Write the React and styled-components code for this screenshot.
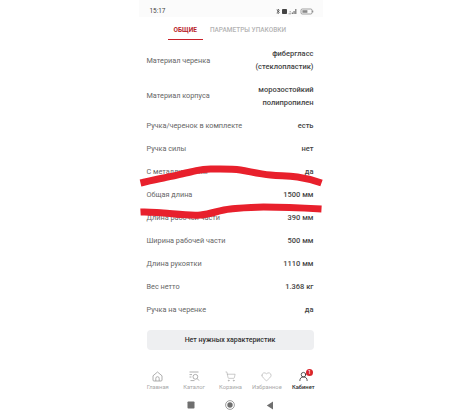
import React from 'react';
import styled, { createGlobalStyle } from 'styled-components';
import { ShoppingCart, Heart, UserRound } from 'lucide-react';

const specs = [
    { name: 'Материал черенка', value: ['фибергласс', '(стеклопластик)'], tall: true },
    { name: 'Материал корпуса', value: ['морозостойкий', 'полипропилен'], tall: true },
    { name: 'Ручка/черенок в комплекте', value: ['есть'] },
    { name: 'Ручка силы', value: ['нет'] },
    { name: 'С металлическим', value: ['да'] },
    { name: 'Общая длина', value: ['1500 мм'] },
    { name: 'Длина рабочей части', value: ['390 мм'] },
    { name: 'Ширина рабочей части', value: ['500 мм'] },
    { name: 'Длина рукоятки', value: ['1110 мм'] },
    { name: 'Вес нетто', value: ['1.368 кг'] },
    { name: 'Ручка на черенке', value: ['да'] },
];

const HomeIcon = function HomeIcon() {
    return (
        <svg width="11" height="11" viewBox="0 0 11 11" fill="none" stroke="currentColor" strokeWidth="0.8">
            <path d="M1 4.8 5.5 1 10 4.8V9a1 1 0 0 1-1 1H2a1 1 0 0 1-1-1z" />
            <path d="M3.8 10V7.4a1.7 1.7 0 0 1 3.4 0V10" />
        </svg>
    );
};

const CatalogIcon = function CatalogIcon() {
    return (
        <svg width="11" height="11" viewBox="0 0 11 11" fill="none" stroke="currentColor" strokeWidth="0.8">
            <path d="M0.5 1h9M0.5 3.6H3M0.5 6H2.4M1.5 9.6h4" />
            <circle cx="6.4" cy="5.8" r="2.4" />
            <path d="M8.2 7.6 10 9.6" />
        </svg>
    );
};

const tabsNav = [
    { label: 'Главная', icon: <HomeIcon /> },
    { label: 'Каталог', icon: <CatalogIcon /> },
    { label: 'Корзина', icon: <ShoppingCart size={11} strokeWidth={1.1} /> },
    { label: 'Избранное', icon: <Heart size={11} strokeWidth={1.1} /> },
    { label: 'Кабинет', icon: <UserRound size={11} strokeWidth={1.6} />, active: true, badge: 1 },
];

const App = function App() {
    return (
        <Screen>
            <GlobalStyle />
            <StatusBar>
                <span>15:17</span>
                <svg width="38" height="7" viewBox="0 0 38 7">
                    <path d="M0.6 1.8 3.4 4.4 2 5.8V1l1.4 1.4L0.6 5" fill="none" stroke="#333" strokeWidth="0.6" />
                    <rect x="6" y="1" width="5" height="5" rx="0.8" fill="#444" />
                    <path d="M12.5 5.8H15M13.5 3.8H15" stroke="#777" strokeWidth="0.7" />
                    <path d="M15.8 6V4.5h.9V6zM17.6 6V3h.9v3zM19.4 6V1h.9v5z" fill="#444" />
                    <rect x="25" y="1" width="11" height="5" rx="1.2" fill="none" stroke="#666" strokeWidth="0.6" />
                    <rect x="26.4" y="2.2" width="5" height="2.6" fill="#888" />
                    <rect x="36.4" y="2.6" width="0.8" height="1.8" fill="#666" />
                </svg>
            </StatusBar>

            <Tabs>
                <Tab $active>ОБЩИЕ</Tab>
                <Tab>ПАРАМЕТРЫ УПАКОВКИ</Tab>
            </Tabs>

            <SpecList>
                {specs.map((spec) => (
                    <SpecRow key={spec.name} $tall={spec.tall}>
                        <SpecName>{spec.name}</SpecName>
                        <SpecValue>
                            {spec.value.map((line) => (
                                <div key={line}>{line}</div>
                            ))}
                        </SpecValue>
                    </SpecRow>
                ))}
            </SpecList>

            <MissingButton>Нет нужных характеристик</MissingButton>

            <BottomNav>
                {tabsNav.map((item) => (
                    <NavItem key={item.label} $active={item.active}>
                        <NavIcon>
                            {item.icon}
                            {item.badge && <Badge>{item.badge}</Badge>}
                        </NavIcon>
                        <span>{item.label}</span>
                    </NavItem>
                ))}
            </BottomNav>

            <SystemBar>
                <svg width="8" height="8" viewBox="0 0 8 8">
                    <rect x="0.5" y="0.5" width="7" height="7" rx="0.8" fill="#6f6f6f" />
                </svg>
                <svg width="10" height="10" viewBox="0 0 10 10">
                    <circle cx="5" cy="5" r="4.4" fill="none" stroke="#777" strokeWidth="0.7" />
                    <circle cx="5" cy="5" r="2.7" fill="#6f6f6f" />
                </svg>
                <svg width="8" height="9" viewBox="0 0 8 9">
                    <path d="M7 0.5v8L0.8 4.5z" fill="#6f6f6f" />
                </svg>
            </SystemBar>

            <Scribble viewBox="0 0 184 90">
                <path d="M1.5 20C10 18 16 16.5 24.5 15S42 11 51.5 9 62 6 71.5 6 92 5.5 101.5 7 120 11 131.5 12 148 12.5 158.5 14 174 17 182.5 20" />
                <path d="M1.5 49C10 48.5 16 49.5 24.5 50S50 53 61.5 52 80 47 91.5 46 112 44 124.5 44 165 45 182.5 46" />
            </Scribble>
        </Screen>
    );
};

const GlobalStyle = createGlobalStyle`
    html, body {
        margin: 0;
        background: #fff;
    }
    body {
        font-family: Roboto, "Liberation Sans", sans-serif;
    }
`;

const Screen = styled.div`
    position: relative;
    box-sizing: border-box;
    width: 184px;
    height: 415px;
    margin: 0 auto;
    display: flex;
    flex-direction: column;
    color: #3a3a3a;
`;

const StatusBar = styled.div`
    height: 17px;
    padding: 5px 9px 0 11px;
    box-sizing: border-box;
    display: flex;
    justify-content: space-between;
    align-items: center;
    background: #fbfbfb;
    font-size: 6.4px;
    color: #444;
`;

const Tabs = styled.div`
    height: 23px;
    padding-left: 29px;
    display: flex;
    gap: 1px;
`;

const Tab = styled.div`
    height: 23px;
    box-sizing: border-box;
    padding: 8.5px 6px 0;
    font-size: 6.5px;
    font-weight: ${(p) => (p.$active ? 700 : 500)};
    color: ${(p) => (p.$active ? '#b8232b' : '#b4b4b4')};
    border-bottom: ${(p) => (p.$active ? '1.5px solid #c8202a' : 'none')};
    white-space: nowrap;
`;

const SpecList = styled.div`
    padding: 2.5px 9px 0 8px;
    display: flex;
    flex-direction: column;
`;

const SpecRow = styled.div`
    height: ${(p) => (p.$tall ? '35.5px' : '23.1px')};
    display: flex;
    justify-content: space-between;
    align-items: center;
`;

const SpecName = styled.div`
    font-size: 7.3px;
    color: #666;
`;

const SpecValue = styled.div`
    font-size: 7.5px;
    font-weight: 500;
    line-height: 13px;
    text-align: right;
    color: #444;
`;

const MissingButton = styled.div`
    height: 20px;
    margin: 9px 9px 0 8px;
    display: flex;
    align-items: center;
    justify-content: center;
    border-radius: 4px;
    background: #eeeff1;
    font-size: 7px;
    font-weight: 500;
    color: #333;
`;

const BottomNav = styled.div`
    margin-top: 21px;
    padding: 0 1px;
    display: grid;
    grid-template-columns: repeat(5, 1fr);
`;

const NavItem = styled.div`
    display: flex;
    flex-direction: column;
    align-items: center;
    gap: 2px;
    font-size: 5.8px;
    font-weight: ${(p) => (p.$active ? 500 : 400)};
    color: ${(p) => (p.$active ? '#2b2b2b' : '#a9a9a9')};
    svg {
        color: ${(p) => (p.$active ? '#222' : '#9a9a9a')};
    }
`;

const NavIcon = styled.div`
    position: relative;
    height: 11px;
`;

const Badge = styled.span`
    position: absolute;
    top: -2px;
    right: -4px;
    width: 7px;
    height: 7px;
    border-radius: 50%;
    background: #d9252c;
    color: #fff;
    font-size: 5px;
    line-height: 7px;
    text-align: center;
`;

const SystemBar = styled.div`
    margin-top: 10px;
    padding: 0 49px 0 48px;
    display: flex;
    justify-content: space-between;
    align-items: center;
`;

const Scribble = styled.svg`
    position: absolute;
    left: 0;
    top: 163px;
    width: 184px;
    height: 90px;
    fill: none;
    stroke: #e8202c;
    stroke-width: 7;
`;

export default App;
